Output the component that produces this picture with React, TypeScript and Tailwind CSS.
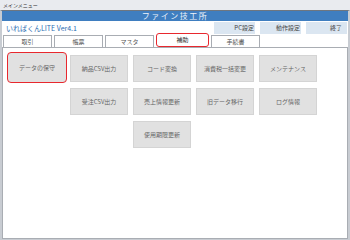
export default function App() {
  const font = { fontFamily: '"Noto Sans CJK JP", "Liberation Sans", sans-serif' };
  const rows: (string | null)[][] = [
    ["データの保守", "納品CSV出力", "コード変換", "消費税一括変更", "メンテナンス"],
    [null, "受注CSV出力", "売上情報更新", "旧データ移行", "ログ情報"],
    [null, null, "使用期限更新", null, null],
  ];
  const tabs = ["取引", "帳票", "マスタ", "補助", "手続書"];

  return (
    <div className="h-[240px] w-[350px] overflow-hidden bg-white" style={font}>
      <div className="flex h-[10px] items-start bg-[#e9ebef] pl-[3px] pt-[2px] text-[5px] leading-none text-[#333]">
        メインメニュー
      </div>
      <div className="h-[230px] border-x-2 border-b-2 border-t border-x-[#c8ccd2] border-b-[#c8ccd2] border-t-[#6e7680] bg-white">
        <div className="flex h-[10px] items-center justify-center bg-[#3f7ec0] text-[8px] leading-none tracking-[1.5px] text-[#eef4fb]">
          ファイン技工所
        </div>
        <div className="flex h-[13px] items-center">
          <div className="flex-1 pl-[4px] pt-[1px] text-[7px] leading-none text-[#2a6db3]">いればくんLITE Ver4.1</div>
          <div className="flex gap-[5px] pr-[1px]">
            {["PC設定", "動作設定", "終了"].map((b, i) => (
              <div
                key={b}
                className={`flex h-[12px] w-[41px] items-center justify-end bg-[#dbe6f1] text-[6px] leading-none text-[#444] ${i === 2 ? "pr-[5px]" : "pr-[1px]"}`}
              >
                {b}
              </div>
            ))}
          </div>
        </div>
        <div className="flex h-[13px] items-end gap-[2px] pl-[1px]">
          {tabs.map((t) =>
            t === "補助" ? (
              <div
                key={t}
                className="flex h-[14px] w-[53px] items-center justify-center rounded-[3px] border border-[#e8282e] bg-white text-[6px] leading-none text-[#333]"
              >
                {t}
              </div>
            ) : (
              <div
                key={t}
                className="flex h-[12px] w-[49px] items-center justify-center border border-b-0 border-[#a9adb3] bg-white text-[6px] leading-none text-[#555]"
              >
                {t}
              </div>
            ),
          )}
        </div>
        <div className="h-[192px] border border-[#a9adb3] bg-white px-[4px] pt-[7px]">
          <div className="flex flex-col gap-[6px]">
            {rows.map((r, ri) => (
              <div key={ri} className="flex gap-[5px]">
                {r.map((c, ci) =>
                  c === null ? (
                    <div key={ci} className="h-[27px] w-[58px]" />
                  ) : c === "データの保守" ? (
                    <div
                      key={ci}
                      className="-mb-[1px] -mr-[2px] -mt-[3px] flex h-[31px] w-[60px] items-center justify-center rounded-[4px] border border-[#e8282e] bg-[#e1e1e1] text-[6px] leading-none text-[#666]"
                    >
                      {c}
                    </div>
                  ) : (
                    <div
                      key={ci}
                      className="flex h-[27px] w-[58px] items-center justify-center border border-[#d4d4d4] bg-[#e1e1e1] text-[6px] leading-none text-[#666]"
                    >
                      {c}
                    </div>
                  ),
                )}
              </div>
            ))}
          </div>
        </div>
      </div>
    </div>
  );
}
